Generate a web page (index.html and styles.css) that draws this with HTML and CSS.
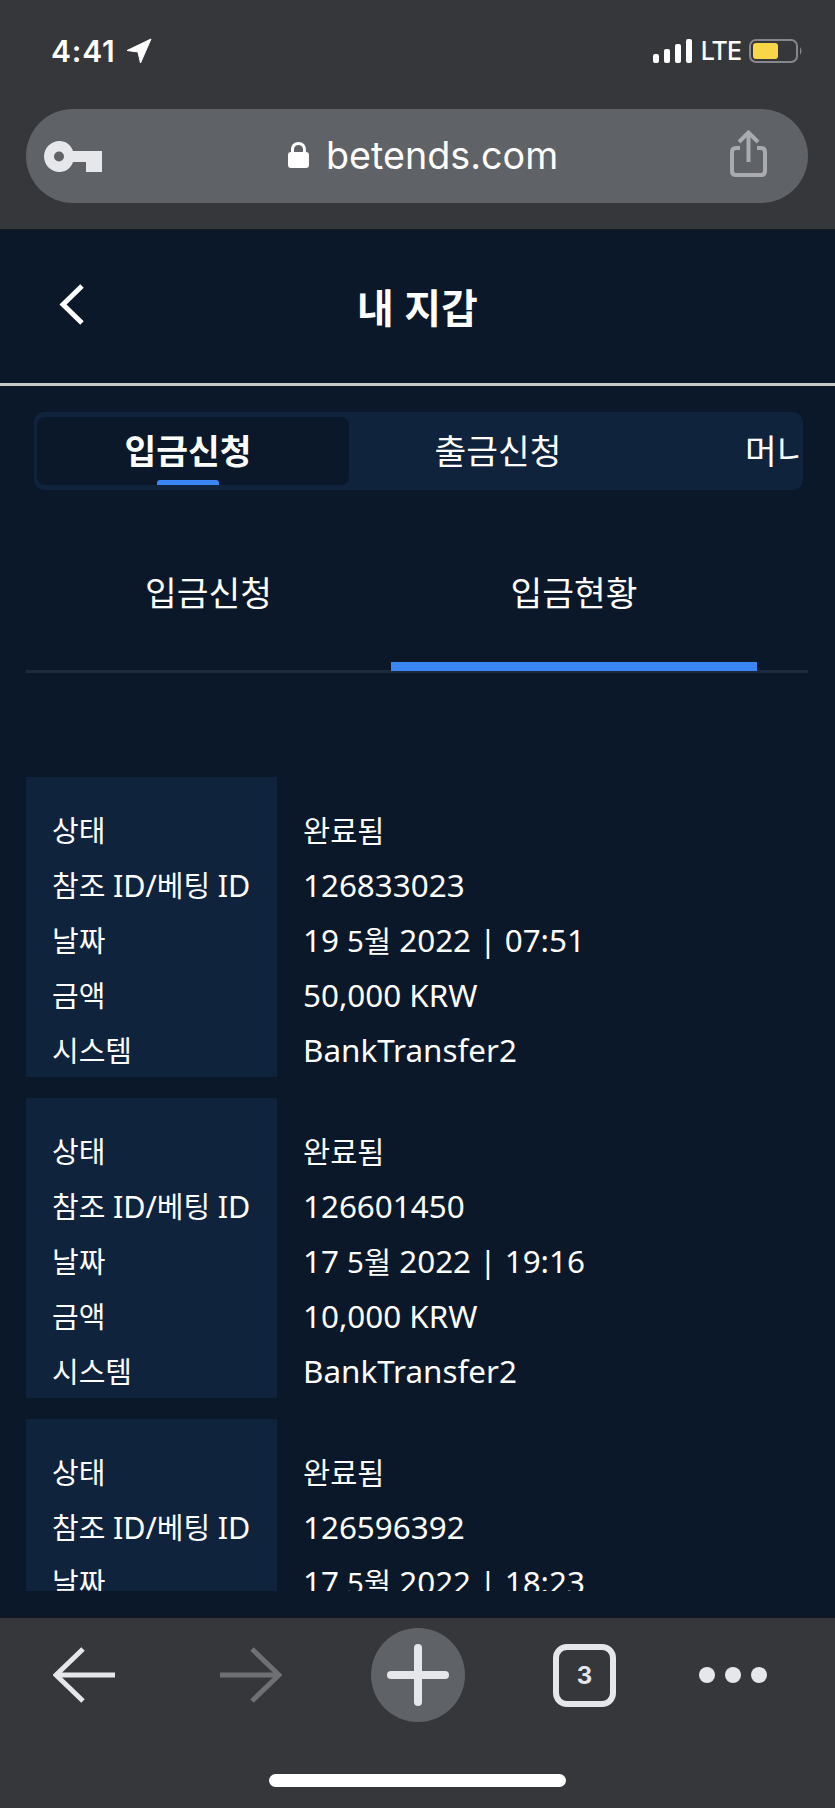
FILE: index.html
```html
<!DOCTYPE html>
<html lang="ko">
<head>
    <meta charset="UTF-8">
    <meta name="viewport" content="width=device-width, initial-scale=1.0">
    <title>내 지갑</title>
    <link rel="stylesheet" href="styles.css">
</head>
<body>
    <header class="chrome">
        <div class="status">
            <div class="status-left">
                <span class="time">4:41</span>
                <svg class="loc" width="26" height="26" viewBox="0 0 26 26"><path d="M25 1 L1 12.500 L12 14 L14.500 25 Z" fill="#fff" stroke="#fff" stroke-linejoin="round"/></svg>
            </div>
            <div class="status-right">
                <svg width="39" height="24" viewBox="0 0 39 24" fill="#fff">
                    <rect x="0" y="15" width="6" height="9" rx="2"/>
                    <rect x="11" y="10" width="6" height="14" rx="2"/>
                    <rect x="22" y="5" width="6" height="19" rx="2"/>
                    <rect x="33" y="0" width="6" height="24" rx="2"/>
                </svg>
                <span class="lte">LTE</span>
                <svg width="54" height="24" viewBox="0 0 54 24">
                    <rect x="1" y="1" width="47" height="22" rx="6" fill="none" stroke="#86878a" stroke-width="2"/>
                    <rect x="4" y="4" width="25" height="16" rx="3" fill="#f8d647"/>
                    <path d="M51 8 Q54 12 51 16 Z" fill="#86878a"/>
                </svg>
            </div>
        </div>
        <div class="urlbar">
            <svg class="key" width="58" height="31" viewBox="0 0 58 31"><path fill-rule="evenodd" fill="#e6e7ea" d="M15.500 0 C22 0 27 4 29 10 H58 V21 H58 V31 H42 V21 H29 C27 27 22 31 15.500 31 C7 31 0 24 0 15.500 C0 7 7 0 15.500 0 Z M15 10.500 A5 5 0 1 0 15 20.500 A5 5 0 1 0 15 10.500 Z"/></svg>
            <div class="url">
                <svg width="21" height="26" viewBox="0 0 21 26"><path fill="#fff" fill-rule="evenodd" d="M3 10 V7.500 C3 3 6 0 10.500 0 C15 0 18 3 18 7.500 V10 C20 10 21 11 21 13 V23 C21 25 20 26 18 26 H3 C1 26 0 25 0 23 V13 C0 11 1 10 3 10 Z M6 10 H15 V7.500 C15 4.500 13 3 10.500 3 C8 3 6 4.500 6 7.500 Z"/></svg>
                <span>betends.com</span>
            </div>
            <svg class="share" width="37" height="47" viewBox="0 0 37 47" fill="none" stroke="#a9abae" stroke-width="4">
                <path d="M10 18 H6 C3.500 18 2 19.500 2 22 V41 C2 43.500 3.500 45 6 45 H31 C33.500 45 35 43.500 35 41 V22 C35 19.500 33.500 18 31 18 H27"/>
                <path d="M18.500 32 V3"/>
                <path d="M9 12 L18.500 2.500 L28 12"/>
            </svg>
        </div>
    </header>

    <main class="page">
        <div class="page-head">
            <svg class="back" width="25" height="41" viewBox="0 0 25 41" fill="none" stroke="#fff" stroke-width="5"><path d="M23 2 L4 20.500 L23 39"/></svg>
            <h1>내 지갑</h1>
        </div>

        <div class="segment">
            <div class="seg-scroll">
                <div class="seg-tab active">입금신청</div>
                <div class="seg-tab second">출금신청</div>
                <div class="seg-tab third">머니</div>
            </div>
        </div>

        <div class="subtabs">
            <div class="subtab">입금신청</div>
            <div class="subtab active">입금현황</div>
        </div>

        <div class="records">
            <div class="record">
                <ul class="labels">
                    <li>상태</li>
                    <li>참조 <span class="lat">ID/</span>베팅 <span class="lat">ID</span></li>
                    <li>날짜</li>
                    <li>금액</li>
                    <li>시스템</li>
                </ul>
                <ul class="values">
                    <li><span class="ko">완료됨</span></li>
                    <li>126833023</li>
                    <li>19 <span class="ko">5월</span> 2022 | 07:51</li>
                    <li>50,000 KRW</li>
                    <li>BankTransfer2</li>
                </ul>
            </div>
            <div class="record">
                <ul class="labels">
                    <li>상태</li>
                    <li>참조 <span class="lat">ID/</span>베팅 <span class="lat">ID</span></li>
                    <li>날짜</li>
                    <li>금액</li>
                    <li>시스템</li>
                </ul>
                <ul class="values">
                    <li><span class="ko">완료됨</span></li>
                    <li>126601450</li>
                    <li>17 <span class="ko">5월</span> 2022 | 19:16</li>
                    <li>10,000 KRW</li>
                    <li>BankTransfer2</li>
                </ul>
            </div>
            <div class="record">
                <ul class="labels">
                    <li>상태</li>
                    <li>참조 <span class="lat">ID/</span>베팅 <span class="lat">ID</span></li>
                    <li>날짜</li>
                </ul>
                <ul class="values">
                    <li><span class="ko">완료됨</span></li>
                    <li>126596392</li>
                    <li>17 <span class="ko">5월</span> 2022 | 18:23</li>
                </ul>
            </div>
        </div>
    </main>

    <footer class="toolbar">
        <div class="tools">
            <svg width="62" height="56" viewBox="0 0 62 56" fill="none" stroke="#e6e7ea" stroke-width="5"><path d="M62 28 H4"/><path d="M30 2 L3 28 L30 54"/></svg>
            <svg width="62" height="56" viewBox="0 0 62 56" fill="none" stroke="#6f7073" stroke-width="5"><path d="M0 28 H58"/><path d="M32 2 L59 28 L32 54"/></svg>
            <div class="plus">
                <svg width="62" height="62" viewBox="0 0 62 62" fill="none" stroke="#e6e7ea" stroke-width="8" stroke-linecap="round"><path d="M4 31 H58"/><path d="M31 4 V58"/></svg>
            </div>
            <div class="tab-count">3</div>
            <div class="dots"><i></i><i></i><i></i></div>
        </div>
        <div class="home-bar"></div>
    </footer>
</body>
</html>
```

FILE: styles.css
```css
:root {
    --chrome: #36373b;
    --page: #0a1829;
    --panel: #10233d;
    --blue: #3b86f5;
    --icon: #e6e7ea;
}
* {
    box-sizing: border-box;
}
body {
    margin: 0;
    width: 835px;
    height: 1808px;
    overflow: hidden;
    display: flex;
    flex-direction: column;
    background: var(--page);
    color: #fff;
    font-family: "Noto Sans", "Noto Sans CJK KR", sans-serif;
}
ul {
    list-style: none;
    margin: 0;
    padding: 0;
}

/* browser top */
.chrome {
    height: 230px;
    flex: none;
    background: var(--chrome);
    border-bottom: 1px solid #17181b;
    padding-top: 39px;
}
.status {
    height: 70px;
    padding: 0 32px 0 51px;
    display: flex;
    justify-content: space-between;
    align-items: flex-start;
}
.status-left {
    display: flex;
    align-items: center;
    gap: 11px;
    height: 24px;
}
.time {
    font-family: Inter, sans-serif;
    font-weight: 600;
    font-size: 30px;
    letter-spacing: 0.8px;
}
.status-right {
    display: flex;
    align-items: center;
    gap: 10px;
    height: 24px;
}
.lte {
    margin: 0 -2px 0 -1px;
    font-family: Inter, sans-serif;
    font-weight: 500;
    font-size: 25px;
    letter-spacing: -1px;
}
.urlbar {
    margin: 0 27px 0 26px;
    height: 94px;
    border-radius: 47px;
    background: #5f6266;
    display: flex;
    align-items: center;
    padding: 0 41px 0 18px;
}
.url {
    margin: 0 0 2px 186px;
    display: flex;
    align-items: center;
    gap: 17px;
    font-family: Inter, sans-serif;
    font-size: 37.700px;
}
.share {
    margin: 0 0 5px auto;
}

/* page header */
.page {
    flex: 1;
    min-height: 0;
}
.page-head {
    height: 156px;
    border-bottom: 3px solid #c9c9c9;
    display: flex;
    align-items: center;
    justify-content: center;
    position: relative;
    padding-bottom: 2px;
}
.back {
    position: absolute;
    left: 59px;
    top: 54px;
}
.page-head h1 {
    margin: 0;
    font-size: 40px;
    font-weight: 700;
}

/* main tabs */
.segment {
    margin: 26px 32px 0 34px;
    height: 78px;
    background: var(--panel);
    border-radius: 10px;
    padding: 5px 4px 5px 3px;
    font-size: 34.500px;
}
.seg-scroll {
    display: flex;
    height: 68px;
    overflow: hidden;
}
.seg-tab {
    flex: none;
    display: flex;
    align-items: center;
    justify-content: center;
    padding-bottom: 4px;
    white-space: nowrap;
}
.seg-tab.active {
    width: 312px;
    padding-right: 10px;
    background: var(--page);
    border-radius: 8px;
    font-weight: 700;
    position: relative;
}
.seg-tab.active::after {
    content: "";
    position: absolute;
    left: 120px;
    bottom: 0;
    width: 62px;
    height: 5px;
    border-radius: 3px 3px 0 0;
    background: var(--blue);
}
.seg-tab.second {
    width: 298px;
}
.seg-tab.third {
    padding-left: 98px;
}

/* sub tabs */
.subtabs {
    margin: 0 27px 0 26px;
    height: 183px;
    display: flex;
    border-bottom: 3px solid #1c2a3d;
    font-size: 34.500px;
}
.subtab {
    width: 365px;
    height: 181px;
    padding-top: 68px;
    text-align: center;
    line-height: 70px;
}
.subtab.active {
    width: 366px;
    border-bottom: 9px solid var(--blue);
}

/* deposit records */
.records {
    margin: 104px 0 0 26px;
    height: 814px;
    overflow: hidden;
    display: flex;
    flex-direction: column;
    gap: 21px;
    font-size: 29px;
}
.record {
    display: flex;
    flex: none;
    height: 300px;
}
.labels {
    width: 251px;
    padding: 26px 0 0 26px;
    background: var(--panel);
    white-space: nowrap;
}
.values {
    padding: 25px 0 0 26px;
    font-size: 31.400px;
}
.labels li, .values li {
    height: 55px;
    line-height: 55px;
}
.lat {
    font-size: 30.500px;
}
.ko {
    font-size: 29.500px;
}

/* browser bottom */
.toolbar {
    height: 191px;
    flex: none;
    background: var(--chrome);
    border-top: 1px solid #17181b;
    padding-top: 10px;
}
.tools {
    height: 94px;
    display: grid;
    grid-template-columns: repeat(5, 1fr);
    align-items: center;
    justify-items: center;
}
.plus {
    width: 94px;
    height: 94px;
    border-radius: 50%;
    background: #5f6266;
    display: flex;
    align-items: center;
    justify-content: center;
}
.tab-count {
    width: 63px;
    height: 63px;
    border: 6px solid var(--icon);
    border-radius: 14px;
    display: flex;
    align-items: center;
    justify-content: center;
    font-family: Inter, sans-serif;
    font-size: 24px;
    font-weight: 700;
    color: var(--icon);
}
.dots {
    display: flex;
    gap: 10px;
    margin-right: 37px;
}
.dots i {
    width: 16px;
    height: 16px;
    border-radius: 50%;
    background: var(--icon);
}
.home-bar {
    width: 297px;
    height: 13px;
    margin: 52px auto 0;
    border-radius: 7px;
    background: #fff;
}
```
